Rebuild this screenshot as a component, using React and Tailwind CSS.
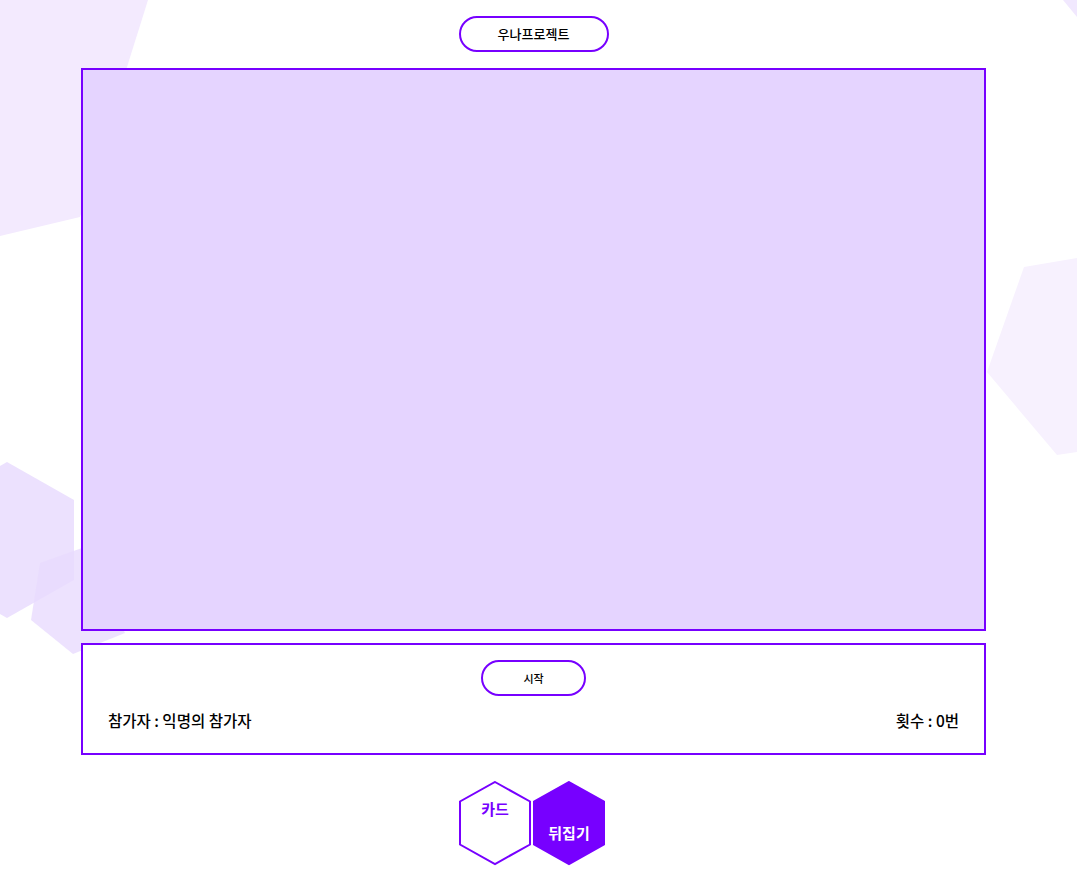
import React from 'react';

const purple = '#7700ff';

function Backdrop() {
    // decorative hexagon shards behind the board
    return (
        <svg className="absolute inset-0 pointer-events-none" width="1077" height="894" viewBox="0 0 1077 894">
            <polygon points="0,0 148,0 80,217 0,236" fill="#f3eafe" />
            <polygon points="1024,267 1077,258 1077,452 1057,455 987,372" fill="#f7f1fe" />
            <polygon points="1063,0 1077,0 1077,17" fill="#f1e8fe" />
            <polygon points="7,462 74,500 74,580 7,618 0,614 0,466" fill="#ece1fe" />
            <polygon points="40,563 82,548 125,633 73,654 31,620" fill="#e9dbfe" fillOpacity="0.8" />
        </svg>
    );
}

function Hex({ filled, label, labelY }) {
    return (
        <div className="relative w-[73px] h-[85px]">
            <svg width="73" height="85" viewBox="0 0 73 85" className="absolute inset-0">
                <polygon
                    points="36,1 71,20.5 71,63.5 36,83 1,63.5 1,20.5"
                    fill={filled ? purple : '#ffffff'}
                    stroke={purple}
                    strokeWidth="2"
                />
            </svg>
            <span
                className={`absolute left-0 right-0 text-center text-[15px] font-bold leading-none ${filled ? 'text-white' : 'text-[#7700ff]'}`}
                style={{ top: labelY }}
            >
                {label}
            </span>
        </div>
    );
}

export default function App() {
    return (
        <div
            className="relative w-[1077px] h-[894px] bg-white overflow-hidden text-black"
            style={{ fontFamily: '"Noto Sans CJK KR", "Noto Sans", sans-serif' }}
        >
            <Backdrop />
            <div className="relative flex flex-col items-center pr-[10px] pt-4">
                <button className="w-[150px] h-9 rounded-full border-2 border-[#7700ff] bg-white text-[13px] font-medium">
                    우나프로젝트
                </button>

                <div className="mt-4 w-[905px] h-[563px] border-2 border-[#7700ff] bg-[#e5d4ff]" />

                <div className="mt-[12px] w-[905px] h-[112px] border-2 border-[#7700ff] bg-white flex flex-col items-center pt-[15px]">
                    <button className="w-[105px] h-9 rounded-full border-2 border-[#7700ff] bg-white text-[11px] font-medium">
                        시작
                    </button>
                    <div className="w-full flex justify-between px-[25px] mt-[13px] text-[15.5px] font-medium">
                        <span>참가자 : 익명의 참가자</span>
                        <span>횟수 : 0번</span>
                    </div>
                </div>

                <div className="mt-[26px] mr-[3px] flex gap-[1px]">
                    <Hex label="카드" labelY={20} />
                    <Hex filled label="뒤집기" labelY={44} />
                </div>
            </div>
        </div>
    );
}
